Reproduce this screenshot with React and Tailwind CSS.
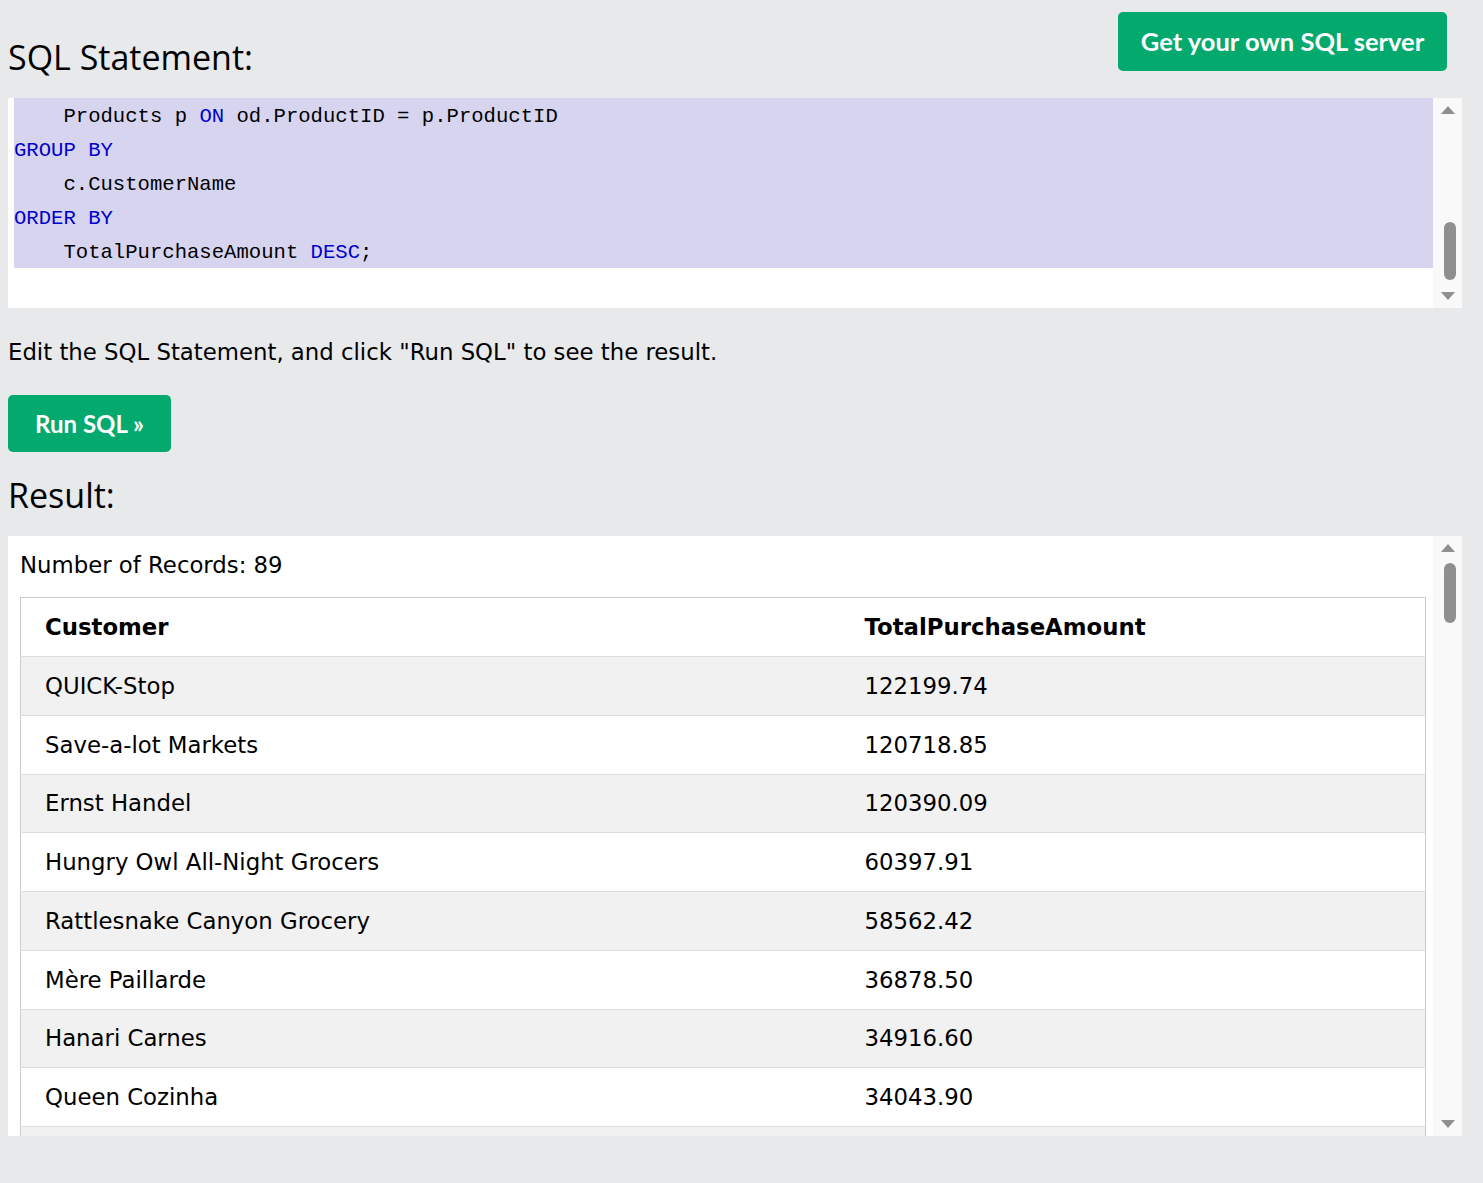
import React from "react";

const rows = [
  ["QUICK-Stop", "122199.74"],
  ["Save-a-lot Markets", "120718.85"],
  ["Ernst Handel", "120390.09"],
  ["Hungry Owl All-Night Grocers", "60397.91"],
  ["Rattlesnake Canyon Grocery", "58562.42"],
  ["Mère Paillarde", "36878.50"],
  ["Hanari Carnes", "34916.60"],
  ["Queen Cozinha", "34043.90"],
  ["", ""],
];

function Scrollbar({ thumbTop, thumbHeight }) {
  return (
    <div className="relative w-[29px] h-full bg-[#f9f9f9] shrink-0">
      <svg className="absolute left-[8px] top-[8px]" width="14" height="8" viewBox="0 0 14 8">
        <polygon points="7,0 14,8 0,8" fill="#8f8f8f" />
      </svg>
      <div
        className="absolute left-[11px] w-[12px] rounded-full bg-[#8f8f8f]"
        style={{ top: thumbTop, height: thumbHeight }}
      />
      <svg className="absolute left-[8px] bottom-[8px]" width="14" height="8" viewBox="0 0 14 8">
        <polygon points="0,0 14,0 7,8" fill="#8f8f8f" />
      </svg>
    </div>
  );
}

const K = ({ children }) => <span className="text-[#0000cd]">{children}</span>;

export default function App() {
  const heading = "font-['Open_Sans',sans-serif] text-[34px] text-black leading-none";
  const body = "font-['DejaVu_Sans',Verdana,sans-serif]";
  return (
    <div className="min-h-[1183px] w-[1483px] bg-[#e7e9eb] pl-[8px] pr-[21px] pt-[12px] text-black">
      <div className="flex items-start justify-between">
        <h2 className={`${heading} mt-[28px]`}>SQL Statement:</h2>
        <button className="mr-[15px] h-[59px] w-[329px] rounded-[5px] bg-[#04aa6d] font-['Lato',sans-serif] text-[25.5px] font-bold text-white">
          Get your own SQL server
        </button>
      </div>

      <div className="mt-[24px] flex h-[210px] bg-white">
        <div className="flex-1 pl-[6px]">
          <div className="h-[170px] bg-[#d7d4f0] pt-[2px] font-['Liberation_Mono',monospace] text-[20.6px] leading-[34px] whitespace-pre">
            <div>    Products p <K>ON</K> od.ProductID = p.ProductID</div>
            <div><K>GROUP</K> <K>BY</K></div>
            <div>    c.CustomerName</div>
            <div><K>ORDER</K> <K>BY</K></div>
            <div>    TotalPurchaseAmount <K>DESC</K>;</div>
          </div>
        </div>
        <Scrollbar thumbTop={124} thumbHeight={58} />
      </div>

      <p className={`${body} mt-[31px] text-[22.8px] leading-[26px]`}>
        Edit the SQL Statement, and click "Run SQL" to see the result.
      </p>

      <button className="mt-[30px] h-[57px] w-[163px] rounded-[5px] bg-[#04aa6d] font-['Lato',sans-serif] text-[24px] font-bold text-white">
        Run SQL »
      </button>

      <h2 className={`${heading} mt-[26px]`}>Result:</h2>

      <div className="mt-[24px] flex h-[600px] overflow-hidden bg-white">
        <div className={`${body} flex-1 overflow-hidden pl-[12px] pr-[7px] text-[22.8px]`}>
          <div className="h-[61px] pt-[16px] leading-[26px]">Number of Records: 89</div>
          <table className="w-full border-collapse border border-[#cccccc]">
            <thead>
              <tr className="h-[59px] bg-white border-b border-[#dddddd]">
                <th className="w-[820px] pl-[24px] text-left font-bold">Customer</th>
                <th className="pl-[24px] text-left font-bold">TotalPurchaseAmount</th>
              </tr>
            </thead>
            <tbody>
              {rows.map(([c, v], i) => (
                <tr
                  key={i}
                  className={`h-[58.75px] border-b border-[#dddddd] ${i % 2 === 0 ? "bg-[#f1f1f1]" : "bg-white"}`}
                >
                  <td className="pl-[24px]">{c}</td>
                  <td className="pl-[24px]">{v}</td>
                </tr>
              ))}
            </tbody>
          </table>
        </div>
        <Scrollbar thumbTop={27} thumbHeight={60} />
      </div>
    </div>
  );
}
